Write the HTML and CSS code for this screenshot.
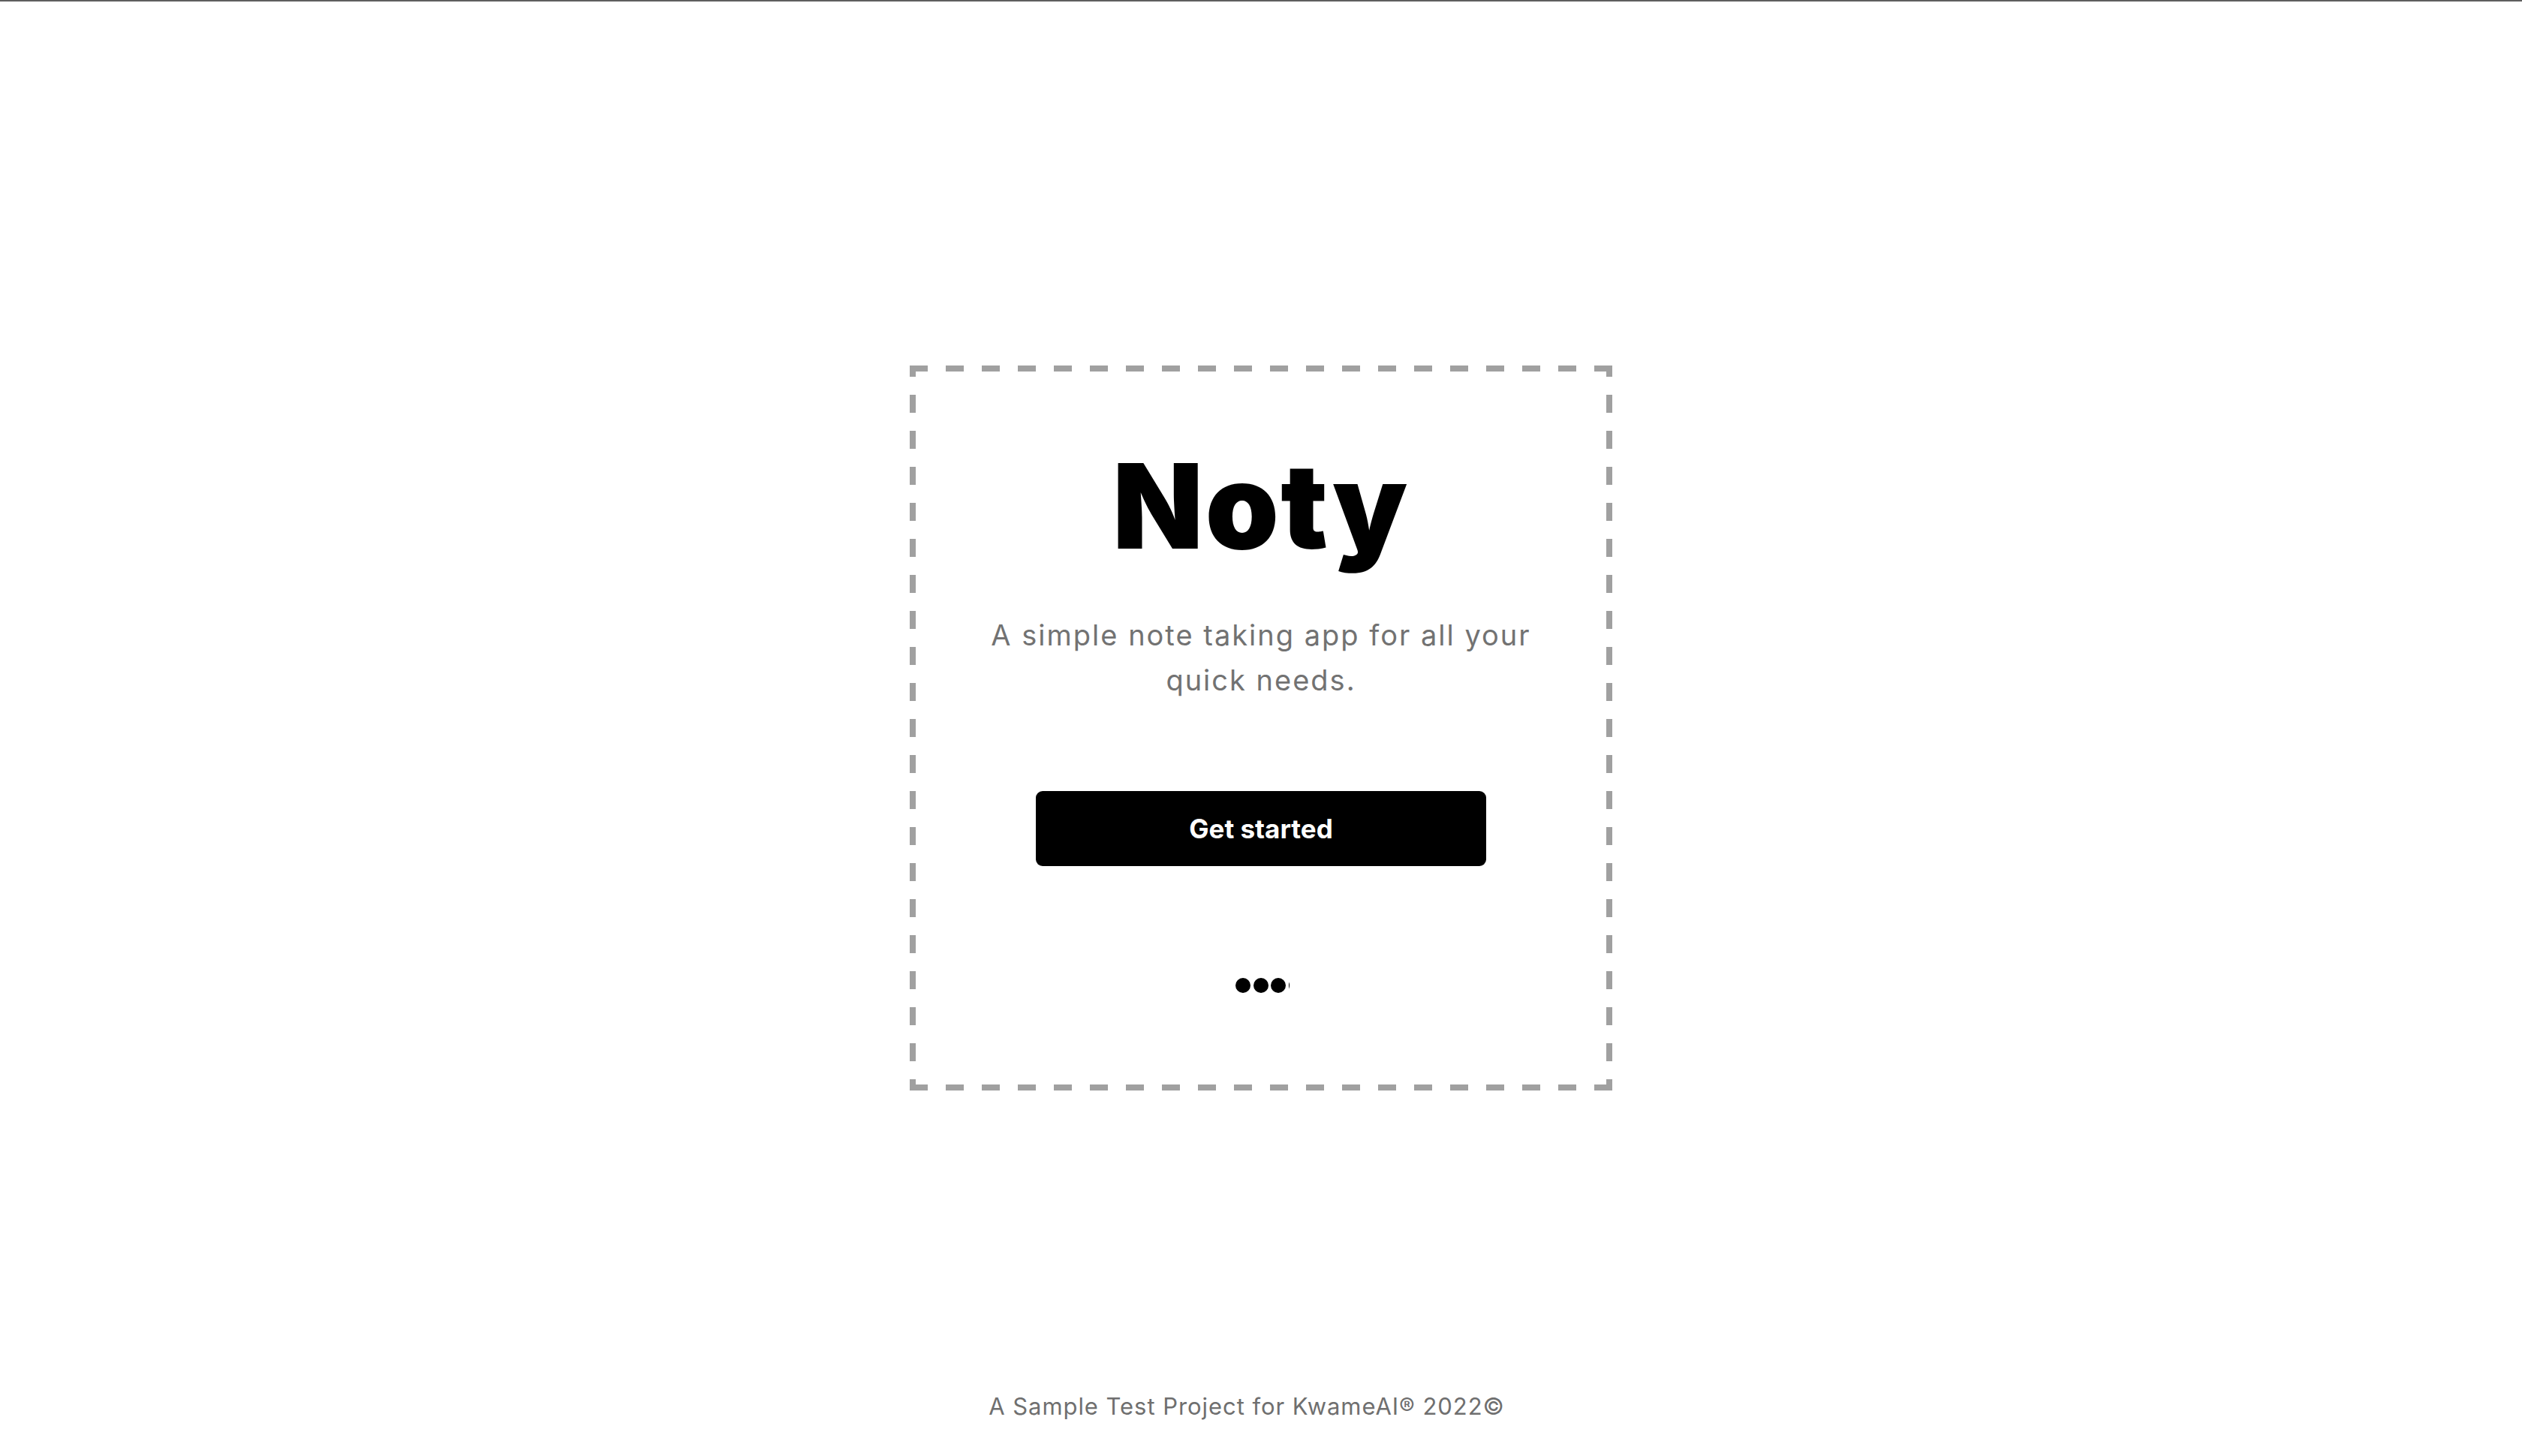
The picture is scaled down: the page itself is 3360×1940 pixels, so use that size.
FILE: index.html
```html
<!DOCTYPE html>
<html lang="en">
<head>
<meta charset="utf-8">
<title>Noty</title>
<link rel="stylesheet" href="styles.css">
</head>
<body>
  <div class="page">
    <main class="card">
      <h1 class="title">Noty</h1>
      <p class="subtitle">A simple note taking app for all your quick needs.</p>
      <button class="cta" type="button">Get started</button>
      <div class="loader">
        <span class="dot"></span>
        <span class="dot"></span>
        <span class="dot"></span>
        <span class="dot"></span>
      </div>
    </main>
    <footer class="footer">A Sample Test Project for KwameAI® 2022©</footer>
  </div>
</body>
</html>
```

FILE: styles.css
```css
html, body {
  margin: 0;
  padding: 0;
  background: #ffffff;
}

body {
  box-shadow: inset 0 2px 0 #5e5e5e;
  font-family: "Inter", "Liberation Sans", sans-serif;
}

.page {
  height: 100vh;
  display: grid;
  grid-template-rows: 1fr auto 1fr;
  justify-items: center;
}

.card {
  --dash: #a0a0a0;
  grid-row: 2;
  box-sizing: border-box;
  width: 936px;
  height: 966px;
  display: flex;
  flex-direction: column;
  align-items: center;
  padding-top: 107px;
  background-image:
    repeating-linear-gradient(to right, var(--dash) 0 24px, transparent 24px 48px),
    repeating-linear-gradient(to right, var(--dash) 0 24px, transparent 24px 48px),
    repeating-linear-gradient(to bottom, var(--dash) 0 15px, transparent 15px 39px, var(--dash) 39px 48px),
    repeating-linear-gradient(to bottom, var(--dash) 0 15px, transparent 15px 39px, var(--dash) 39px 48px);
  background-size: 100% 8px, 100% 8px, 8px 100%, 8px 100%;
  background-position: left top, left bottom, left top, right top;
  background-repeat: no-repeat;
}

.title {
  margin: 0;
  font-family: "Inter", "Liberation Sans", sans-serif;
  font-weight: 900;
  font-size: 157px;
  line-height: 160px;
  letter-spacing: 2.5px;
  color: #000;
}

.subtitle {
  margin: 62px 0 0;
  max-width: 750px;
  text-align: center;
  font-family: "Inter", "Liberation Sans", sans-serif;
  font-weight: 400;
  font-size: 38px;
  line-height: 60px;
  letter-spacing: 2px;
  color: #727272;
}

.cta {
  margin-top: 118px;
  width: 600px;
  height: 100px;
  border: none;
  border-radius: 9px;
  background: #000;
  color: #fff;
  font-family: "Inter", "Liberation Sans", sans-serif;
  font-weight: 700;
  font-size: 35px;
  cursor: pointer;
}

.loader {
  margin-top: 149px;
  margin-left: 4px;
  width: 72px;
  height: 20px;
  overflow: hidden;
  display: flex;
  gap: 3.5px;
}

.dot {
  flex: 0 0 20px;
  width: 20px;
  height: 20px;
  border-radius: 50%;
  background: #000;
}

.footer {
  grid-row: 3;
  align-self: end;
  margin-right: 38px;
  padding-bottom: 44px;
  font-family: "Inter", "Liberation Sans", sans-serif;
  font-size: 31px;
  line-height: 45px;
  letter-spacing: 0.95px;
  color: #6f6f6f;
}
```
